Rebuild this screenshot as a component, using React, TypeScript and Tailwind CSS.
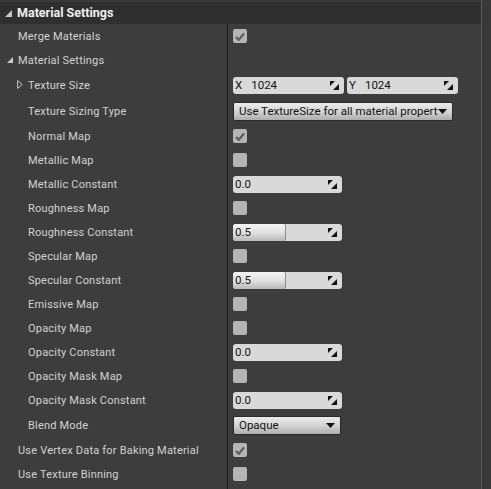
import React from "react";

const font = { fontFamily: "Roboto, 'Noto Sans', sans-serif" };

function Check({ checked }: { checked: boolean }) {
  return (
    <div className="flex h-[14px] w-[14px] items-center justify-center rounded-[2px] bg-[#b5b5b5]">
      {checked && (
        <svg width="10" height="9" viewBox="0 0 10 9">
          <path d="M1 5l2.8 2.8L9 1.5" fill="none" stroke="#5e5e5e" strokeWidth="2.2" />
        </svg>
      )}
    </div>
  );
}

function Spin() {
  return (
    <svg width="9" height="9" viewBox="0 0 9 9" className="shrink-0">
      <polygon points="0,0 5,0 0,5" fill="#111" />
      <polygon points="9,9 9,3 3,9" fill="#111" />
    </svg>
  );
}

function NumField({ prefix, value, width, slider }: { prefix?: string; value: string; width: string; slider?: number }) {
  return (
    <div className={`relative flex h-[17px] items-center overflow-hidden rounded-[3px] bg-[#d9d9d9] ${width}`}>
      {slider !== undefined && (
        <div
          className="absolute left-0 top-0 h-full rounded-r-[2px] border-r border-[#8a8a8a] bg-gradient-to-b from-[#f4f4f4] via-[#e2e2e2] to-[#b8b8b8]"
          style={{ width: `${slider}%` }}
        />
      )}
      <div className="relative flex flex-1 items-center px-[2px] pt-[1px] text-[11.5px] text-[#121212]">
        {prefix && <span className="mr-[9px]">{prefix}</span>}
        <span>{value}</span>
      </div>
      <div className="relative mr-[5px]">
        <Spin />
      </div>
    </div>
  );
}

function Combo({ text, width }: { text: string; width: string }) {
  return (
    <div
      className={`flex h-[19px] items-center rounded-[2px] border border-[#2a2a2a] bg-gradient-to-b from-[#ececec] via-[#d4d4d4] to-[#aeaeae] pl-[5px] pr-[5px] pt-[1px] text-[11.5px] text-[#111] ${width}`}
    >
      <span className="flex-1 overflow-hidden whitespace-nowrap">{text}</span>
      <svg width="9" height="5" viewBox="0 0 9 5" className="shrink-0">
        <polygon points="0,0 9,0 4.5,5" fill="#111" />
      </svg>
    </div>
  );
}

type Row = {
  label: string;
  indent: number;
  h: string;
  arrow?: "open" | "closed";
  value: React.ReactNode;
};

const rows: Row[] = [
  { label: "Merge Materials", indent: 18, h: "h-[24px]", value: <Check checked /> },
  { label: "Material Settings", indent: 18, h: "h-[24px]", arrow: "open", value: null },
  {
    label: "Texture Size",
    indent: 28,
    h: "h-[26px]",
    arrow: "closed",
    value: (
      <div className="flex gap-[3px]">
        <NumField prefix="X" value="1024" width="w-[111px]" />
        <NumField prefix="Y" value="1024" width="w-[111px]" />
      </div>
    ),
  },
  {
    label: "Texture Sizing Type",
    indent: 28,
    h: "h-[26px]",
    value: <Combo text="Use TextureSize for all material properties" width="w-[220px]" />,
  },
  { label: "Normal Map", indent: 28, h: "h-[24px]", value: <Check checked /> },
  { label: "Metallic Map", indent: 28, h: "h-[24px]", value: <Check checked={false} /> },
  { label: "Metallic Constant", indent: 28, h: "h-[24px]", value: <NumField value="0.0" width="w-[109px]" /> },
  { label: "Roughness Map", indent: 28, h: "h-[24px]", value: <Check checked={false} /> },
  { label: "Roughness Constant", indent: 28, h: "h-[24px]", value: <NumField value="0.5" width="w-[109px]" slider={49} /> },
  { label: "Specular Map", indent: 28, h: "h-[24px]", value: <Check checked={false} /> },
  { label: "Specular Constant", indent: 28, h: "h-[24px]", value: <NumField value="0.5" width="w-[109px]" slider={49} /> },
  { label: "Emissive Map", indent: 28, h: "h-[24px]", value: <Check checked={false} /> },
  { label: "Opacity Map", indent: 28, h: "h-[24px]", value: <Check checked={false} /> },
  { label: "Opacity Constant", indent: 28, h: "h-[24px]", value: <NumField value="0.0" width="w-[109px]" /> },
  { label: "Opacity Mask Map", indent: 28, h: "h-[24px]", value: <Check checked={false} /> },
  { label: "Opacity Mask Constant", indent: 28, h: "h-[24px]", value: <NumField value="0.0" width="w-[109px]" /> },
  { label: "Blend Mode", indent: 28, h: "h-[26px]", value: <Combo text="Opaque" width="w-[108px]" /> },
  { label: "Use Vertex Data for Baking Material", indent: 18, h: "h-[24px]", value: <Check checked /> },
  { label: "Use Texture Binning", indent: 18, h: "h-[24px]", value: <Check checked={false} /> },
];

export default function App() {
  return (
    <div className="flex h-[489px] w-[491px] overflow-hidden bg-[#3d3d3d]" style={font}>
      <div className="flex w-[481px] flex-col">
        <div className="h-[2px] bg-[#3a3a3a]" />
        <div className="flex h-[22px] items-center bg-[#2f2f2f] pt-[1px]">
          <svg width="7" height="7" viewBox="0 0 7 7" className="ml-[5px] mr-[5px]">
            <polygon points="7,0 7,7 0,7" fill="#c8c8c8" />
          </svg>
          <span className="text-[12.5px] font-bold text-[#f0f0f0]">Material Settings</span>
        </div>
        {rows.map((r) => (
          <div key={r.label} className={`flex ${r.h}`}>
            <div
              className="relative flex w-[228px] items-center border-r border-[#1a1a1a] pt-[2px] text-[11px] tracking-[0.2px] text-[#d2d2d2]"
              style={{ paddingLeft: r.indent }}
            >
              {r.arrow === "open" && (
                <svg width="6" height="6" viewBox="0 0 6 6" className="absolute left-[7px] top-[9px]">
                  <polygon points="6,0 6,6 0,6" fill="#c8c8c8" />
                </svg>
              )}
              {r.arrow === "closed" && (
                <svg width="6" height="9" viewBox="0 0 6 9" className="absolute left-[17px] top-[8px]">
                  <polygon points="0.6,0.6 5.2,4.5 0.6,8.4" fill="none" stroke="#c8c8c8" strokeWidth="1" />
                </svg>
              )}
              {r.label}
            </div>
            <div className="flex flex-1 items-center pl-[5px]">{r.value}</div>
          </div>
        ))}
        <div className="flex flex-1">
          <div className="w-[228px] border-r border-[#1a1a1a]" />
        </div>
      </div>
      <div className="w-[1px] bg-[#5a5a5a]" />
      <div className="flex-1 bg-[#383838]" />
    </div>
  );
}
